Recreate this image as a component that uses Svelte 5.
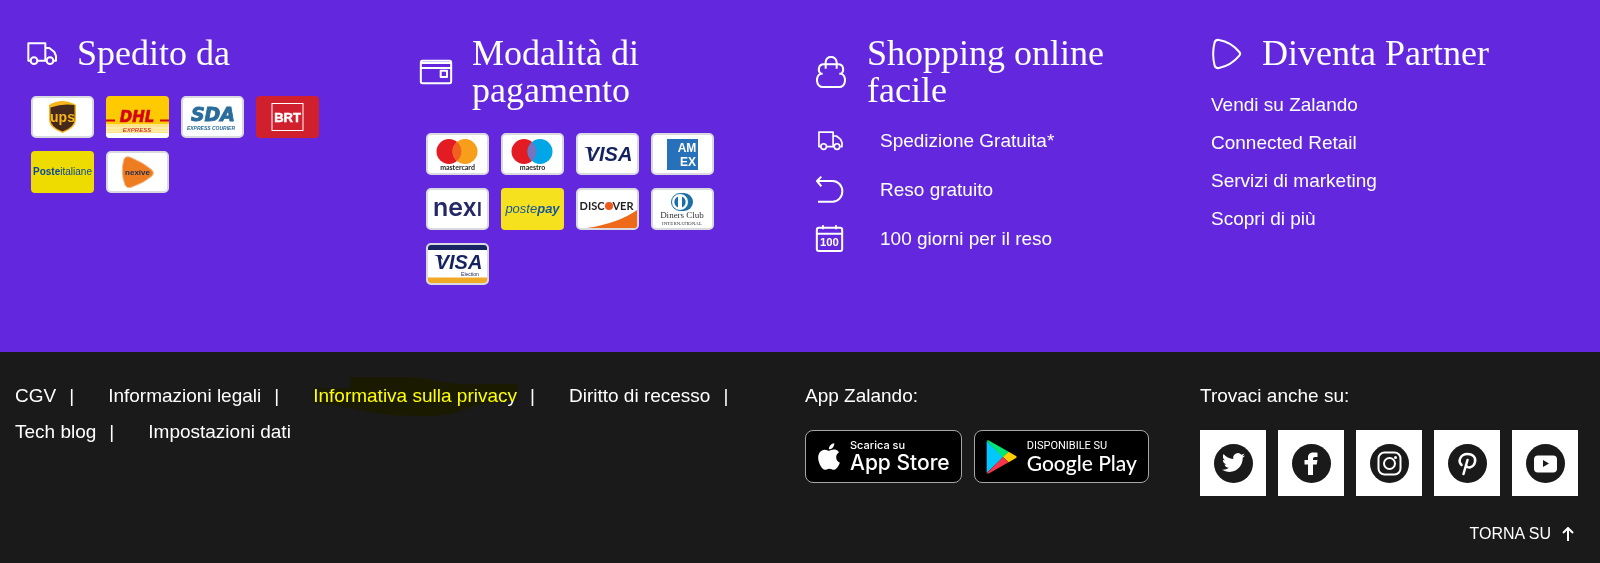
<script lang="ts">
  const carriers = ['ups', 'dhl', 'sda', 'brt', 'poste', 'nexive']
  const payments = ['mastercard', 'maestro', 'visa', 'amex', 'nexi', 'postepay', 'discover', 'diners', 'electron']
  const benefits = [
    { icon: 'truck', label: 'Spedizione Gratuita*' },
    { icon: 'return', label: 'Reso gratuito' },
    { icon: 'calendar', label: '100 giorni per il reso' },
  ]
  const partner = ['Vendi su Zalando', 'Connected Retail', 'Servizi di marketing', 'Scopri di più']
  const legal = ['CGV', 'Informazioni legali', 'Informativa sulla privacy', 'Diritto di recesso', 'Tech blog', 'Impostazioni dati']
  const social = ['Twitter', 'Facebook', 'Instagram', 'Pinterest', 'YouTube']
  const marked = 'Informativa sulla privacy'
</script>

{#snippet truck(width: number)}
  <svg class="line" {width} viewBox="-4 0 90 70" aria-hidden="true">
    <path d="M10 56H3V4h51v52H31M54 18h12l15 12 5 12v14h-6M54 56h3" />
    <circle cx="20" cy="56" r="10" /><circle cx="68" cy="56" r="10" />
  </svg>
{/snippet}

<!-- Every brand card shares a 63x42 drawing area -->
{#snippet brand(name: string)}
  <svg class="card" viewBox="0 0 63 42" role="img" aria-label={name}>
    {#if name === 'dhl'}
      <rect width="63" height="42" rx="4" fill="#ffcb00" />
      <path d="M0 28h63v10q0 4-4 4H4q-4 0-4-4z" fill="#ffe58a" />
      <path d="M0 32h63M0 35h63" stroke="#fff3c4" />
      <path d="M0 37h63v1q0 4-4 4H4q-4 0-4-4z" fill="#fff" />
      <path d="M0 24.500h9M54 24.500h9" stroke="#d40511" stroke-width="2" />
      <text x="31" y="26" class="wide" font-size="15" fill="#d40511" stroke="#d40511" stroke-width=".6">DHL</text>
      <text x="31" y="36" font-size="6" font-style="italic" fill="#d40511">EXPRESS</text>
    {:else if name === 'brt'}
      <rect width="63" height="42" rx="4" fill="#d0202e" />
      <rect x="16" y="7.500" width="31" height="27" fill="none" stroke="#fff" />
      <text x="31.500" y="26" font-size="13" font-weight="700" fill="#fff" stroke="#fff" stroke-width=".5">BRT</text>
    {:else if name === 'poste'}
      <rect width="63" height="42" rx="4" fill="#eedc00" />
      <text x="31.500" y="24" font-size="10" fill="#0a479c"><tspan font-weight="700">Poste</tspan>italiane</text>
    {:else if name === 'postepay'}
      <rect width="63" height="42" rx="4" fill="#f6e11f" />
      <text x="31.500" y="25" font-size="13" font-style="italic" fill="#17569b">poste<tspan font-weight="700">pay</tspan></text>
    {:else}
      <rect x="1" y="1" width="61" height="40" rx="4" fill="#fff" stroke="#d9d9e0" stroke-width="2" />
      {#if name === 'ups'}
        <path d="M18 9q13-8 27 0v15q0 8-13.500 13Q18 32 18 24z" fill="#f7b51b" />
        <path d="M19.500 11.500Q32 7 43.500 9v15q0 7-12 11.500-12-4.500-12-11.500z" fill="#45291b" />
        <text x="31.500" y="26" font-size="14" font-weight="700" fill="#f7b51b">ups</text>
      {:else if name === 'sda'}
        <text x="32" y="25" class="wide" font-size="19" fill="#2a6c9c" stroke="#2a6c9c" stroke-width=".9">SDA</text>
        <text x="30" y="34" font-size="5" font-weight="700" font-style="italic" fill="#2a6c9c">EXPRESS COURIER</text>
      {:else if name === 'nexive'}
        <path d="M18 8q2-4 8-1 12 5 20 12 3 3 0 6-8 7-20 11-5 2-7-2-5-13-1-26z" fill="#ee7d22" stroke="#f6b98a" stroke-width="1" />
        <text x="31.500" y="24" font-size="8" font-weight="700" fill="#1c2a57">nexive</text>
      {:else if name === 'mastercard' || name === 'maestro'}
        <circle cx="23" cy="18.500" r="12.500" fill="#e31b23" />
        <circle cx="39" cy="18.500" r="12.500" fill={name === 'maestro' ? '#00a6e6' : '#f79e1b'} />
        <path d="M31 9a12.500 12.500 0 0 1 0 19 12.500 12.500 0 0 1 0-19" fill={name === 'maestro' ? '#7673c0' : '#f2601f'} />
        <text x="31.500" y="37" class="geo" font-size="7" font-weight="700" fill="#222">{name}</text>
      {:else if name === 'visa'}
        <text x="33" y="28" font-size="20" font-weight="700" font-style="italic" fill="#14225f">VISA</text>
        <path d="M8 14h7l2 5q-4-4-9-5" fill="#14225f" />
      {:else if name === 'amex'}
        <rect x="16" y="6" width="31" height="31" fill="#2671b9" />
        <text x="36" y="19" font-size="12" font-weight="700" fill="#fff">AM</text>
        <text x="37" y="33" font-size="12" font-weight="700" fill="#fff">EX</text>
      {:else if name === 'nexi'}
        <text x="31.500" y="28" class="inter" font-size="25" font-weight="600" fill="#232866">nex<tspan font-size="19">I</tspan></text>
      {:else if name === 'discover'}
        <path d="M11 40q32-5 50-18v16q0 2-2 2z" fill="#ee6a1a" />
        <text x="16" y="22" class="geo" font-size="11" font-weight="700" fill="#222">DISC</text>
        <circle cx="33" cy="18" r="4" fill="#ee5a1a" />
        <text x="47" y="22" class="geo" font-size="11" font-weight="700" fill="#222">VER</text>
      {:else if name === 'diners'}
        <path d="M29 5h4a9 9 0 0 1 0 18h-4z" fill="#1b6ea8" />
        <circle cx="29" cy="14" r="8.500" fill="#fff" stroke="#1b6ea8" />
        <path d="M27 8.500a6 6 0 0 0 0 11zM31 8.500a6 6 0 0 1 0 11z" fill="#1b6ea8" />
        <text x="31" y="30" class="serif" font-size="9" fill="#333">Diners Club</text>
        <text x="31" y="37" class="serif" font-size="5" fill="#333">INTERNATIONAL</text>
      {:else if name === 'electron'}
        <path d="M2 7V5q0-3 3-3h53q3 0 3 3v2z" fill="#182560" />
        <path d="M2 34.500V37q0 3 3 3h53q3 0 3-3v-2.500z" fill="#f0a926" />
        <text x="33" y="26" font-size="20" font-weight="700" font-style="italic" fill="#14225f">VISA</text>
        <path d="M8 12h7l2 5q-4-4-9-5" fill="#14225f" />
        <text x="44" y="33" font-size="5" fill="#14225f">Election</text>
      {/if}
    {/if}
  </svg>
{/snippet}

<section class="services">
  <div class="col">
    <h2><span class="slot">{@render truck(30)}</span>Spedito da</h2>
    <div class="cards">
      {#each carriers as name}{@render brand(name)}{/each}
    </div>
  </div>

  <div class="col">
    <h2>
      <span class="slot">
        <svg class="line" width="32" viewBox="0 0 96 72" aria-hidden="true">
          <rect x="2.500" y="2.500" width="91" height="67" rx="5" />
          <path d="M3 9h90M3 24h90" />
          <rect x="62" y="32" width="19" height="19" stroke-width="6" />
        </svg>
      </span>
      Modalità di pagamento
    </h2>
    <div class="cards">
      {#each payments as name}{@render brand(name)}{/each}
    </div>
  </div>

  <div class="col">
    <h2>
      <span class="slot">
        <svg class="line" width="30" viewBox="0 0 90 96" aria-hidden="true">
          <path d="M29 38V18q2-15 16-15t17 15v20" />
          <path d="M23 25h44c15 0 19 18 9 28 16 8 15 40-7 40H21C-1 93-2 61 14 53 4 43 8 25 23 25zM14 53h6M76 53h-6" />
        </svg>
      </span>
      Shopping online facile
    </h2>
    <ul class="benefits">
      {#each benefits as item}
        <li>
          <span class="slot">
            {#if item.icon === 'truck'}
              {@render truck(25)}
            {:else if item.icon === 'return'}
              <svg class="line" width="27" viewBox="0 0 81 81" aria-hidden="true">
                <path d="M16 2 3 15l13 16M3 15h47a29 31 0 0 1 0 62H6" />
              </svg>
            {:else}
              <svg class="line" width="27" viewBox="0 0 81 81" aria-hidden="true">
                <rect x="2.500" y="8" width="76" height="70" rx="6" />
                <path d="M3 26h75M21 1v12M60 1v12" />
                <text x="40" y="63" font-size="34" font-weight="700">100</text>
              </svg>
            {/if}
          </span>
          {item.label}
        </li>
      {/each}
    </ul>
  </div>

  <div class="col">
    <h2>
      <span class="slot">
        <svg class="line" width="29" viewBox="0 0 87 90" aria-hidden="true">
          <path d="M8 10q3-9 13-7 36 6 61 36 5 6 0 11-25 30-61 37-10 2-13-7-9-36 0-70z" />
        </svg>
      </span>
      Diventa Partner
    </h2>
    <ul class="partner">
      {#each partner as label}
        <li><a href="#partner">{label}</a></li>
      {/each}
    </ul>
  </div>
</section>

<footer>
  <ul class="legal">
    {#each legal as label, i}
      <li>
        <a href="#legal" class:marked={label === marked}>
          {label}
          {#if label === marked}
            <svg class="marker" width="208" height="42" viewBox="0 0 208 42" aria-hidden="true">
              <path d="M0 12h37V1h50c32 0 38 7 68 7h50v17c-20 1-36 2-47 6-16 6-22 9-45 9-38 0-48-2-66-6C28 30 12 28 0 27z" />
            </svg>
          {/if}
        </a>
        {#if i < legal.length - 1}<span class="bar">|</span>{/if}
      </li>
    {/each}
  </ul>

  <div>
    <p>App Zalando:</p>
    <div class="stores">
      <a href="#app-store" class="store apple">
        <svg width="24" height="29" viewBox="3 1.500 18 21" aria-hidden="true">
          <path fill="#fff" d="M18.710 19.500c-.83 1.240-1.710 2.450-3.050 2.470-1.340.03-1.770-.79-3.290-.79-1.530 0-2 .77-3.270.82-1.310.05-2.300-1.320-3.140-2.530C4.250 17 2.940 12.450 4.700 9.390c.87-1.520 2.430-2.480 4.120-2.510 1.280-.02 2.500.87 3.290.87.78 0 2.260-1.070 3.810-.91.65.03 2.470.26 3.640 1.980-.09.06-2.170 1.280-2.150 3.810.03 3.020 2.650 4.030 2.680 4.040-.03.07-.42 1.440-1.380 2.830M13 3.500c.73-.83 1.940-1.460 2.940-1.500.13 1.170-.34 2.350-1.040 3.190-.69.85-1.830 1.510-2.950 1.420-.15-1.150.41-2.350 1.050-3.110z" />
        </svg>
        <span><small>Scarica su</small>App Store</span>
      </a>
      <a href="#google-play" class="store google">
        <svg width="31" height="34" viewBox="0 0 93 102" aria-hidden="true">
          <path d="M2 3v96l50-48z" fill="#00c8ff" />
          <path d="M2 2q4-3 9 1l57 32-17 18z" fill="#00e676" />
          <path d="m68 35 22 13q4 3 0 6L68 67 51 51z" fill="#ffce00" />
          <path d="M2 100q4 2 9-1l57-32-17-16z" fill="#f6344a" />
        </svg>
        <span><small>DISPONIBILE SU</small>Google Play</span>
      </a>
    </div>
  </div>

  <div>
    <p>Trovaci anche su:</p>
    <div class="social">
      {#each social as name}
        <a href="#social" aria-label={name}>
          <svg width="39" height="39" viewBox="0 0 39 39" aria-hidden="true">
            <circle cx="19.500" cy="19.500" r="19.500" fill="#1a1a1a" />
            {#if name === 'Twitter'}
              <path transform="translate(8 7) scale(.96)" fill="#fff" d="M23.950 4.570a10 10 0 0 1-2.820.77 4.960 4.960 0 0 0 2.160-2.720c-.95.56-2 .96-3.130 1.180a4.920 4.920 0 0 0-8.380 4.480C7.690 8.090 4.070 6.130 1.640 3.160a4.820 4.820 0 0 0-.67 2.480c0 1.710.87 3.210 2.190 4.100a4.900 4.900 0 0 1-2.230-.62v.06a4.920 4.920 0 0 0 3.950 4.830 5 5 0 0 1-2.210.09 4.940 4.940 0 0 0 4.600 3.420A9.870 9.870 0 0 1 0 19.540a14 14 0 0 0 7.550 2.210c9.050 0 14-7.500 14-13.980 0-.21 0-.42-.02-.63a9.940 9.940 0 0 0 2.460-2.550z" />
            {:else if name === 'Facebook'}
              <path fill="#fff" d="M16 31V20.500h-3.500V16H16v-2.500c0-3.500 2-5 5.500-5 2 0 4 .2 4 .2V13h-2.300c-1.500 0-2.200.8-2.200 2v1h4.500l-.8 4.500H21V31z" />
            {:else if name === 'Instagram'}
              <g fill="none" stroke="#fff" stroke-width="2">
                <rect x="8.500" y="8.500" width="22" height="22" rx="6" />
                <circle cx="19.500" cy="19.500" r="5.500" />
              </g>
              <circle cx="25.500" cy="13.500" r="1.500" fill="#fff" />
            {:else if name === 'Pinterest'}
              <path fill="none" stroke="#fff" stroke-width="2.500" stroke-linecap="round" d="M13.500 21c-4-4-1-11 6-11 6 0 8.500 4 7.500 8-1.500 6-8 7-9 3M19.500 16 15.500 30" />
            {:else}
              <rect x="8" y="11.500" width="23" height="17" rx="4" fill="#fff" />
              <path d="m17 16 6 3.500-6 3.500z" fill="#1a1a1a" />
            {/if}
          </svg>
        </a>
      {/each}
    </div>
    <button type="button" class="top">
      TORNA SU
      <svg width="12" height="14" viewBox="0 0 12 14" aria-hidden="true">
        <path d="M6 14V1M1 6l5-5 5 5" fill="none" stroke="currentColor" stroke-width="2" />
      </svg>
    </button>
  </div>
</footer>

<style>
  :global(body) {
    margin: 0;
    background: #1a1a1a;
    color: #fff;
    font: 19px/36px 'Liberation Sans', Arial, sans-serif;
  }

  a { color: inherit; text-decoration: none; }
  ul { margin: 0; padding: 0; list-style: none; }
  p { margin: 0 0 16px; }

  .services,
  footer {
    display: grid;
    grid-template-columns: repeat(4, minmax(0, 1fr));
    padding: 35px 5px 67px 15px;
  }
  .services { background: #6328de; }

  h2 {
    display: flex;
    align-items: center;
    gap: 10px;
    margin: 0;
    padding-right: 80px;
    font: 400 36px/37px 'Liberation Serif', 'Times New Roman', serif;
  }
  .slot {
    flex: none;
    display: flex;
    justify-content: center;
    width: 52px;
  }
  .line {
    overflow: visible;
    fill: none;
    stroke: #fff;
    stroke-width: 6;
    stroke-linejoin: round;
  }
  .line text { fill: #fff; stroke: none; }

  .cards {
    display: grid;
    grid-template-columns: repeat(4, 63px);
    gap: 13px 12px;
    margin: 24px 0 0 16px;
  }
  .card { display: block; width: 63px; height: 42px; }
  text { text-anchor: middle; font-family: 'Liberation Sans', Arial, sans-serif; }
  .wide { font-family: 'DejaVu Sans', sans-serif; font-weight: 700; font-style: italic; }
  .geo { font-family: Lato, sans-serif; }
  .inter { font-family: Inter, sans-serif; }
  .serif { font-family: 'Liberation Serif', serif; }

  .benefits { margin-top: 7px; }
  .benefits li {
    display: flex;
    align-items: center;
    gap: 27px;
    height: 49px;
  }
  .benefits .slot { width: 48px; }

  .partner { margin: 14px 0 0 11px; line-height: 38px; }

  footer { padding: 26px 5px 19px 15px; }
  .legal {
    grid-column: span 2;
    display: flex;
    flex-wrap: wrap;
    align-content: flex-start;
    column-gap: 34px;
  }
  .legal li { display: flex; gap: 13px; }
  .marked { position: relative; }
  .marker {
    position: absolute;
    top: -2px;
    left: 0;
    fill: #ff0;
    mix-blend-mode: multiply;
  }

  .stores,
  .social { display: flex; gap: 12px; }
  .store {
    display: flex;
    align-items: center;
    box-sizing: border-box;
    height: 53px;
    padding: 0 11px;
    border: 1px solid #a6a6a6;
    border-radius: 8px;
    background: #000;
    white-space: nowrap;
  }
  .store small { display: block; font-size: 11px; line-height: 13px; }
  .apple { gap: 9px; font: 500 21px/22px Inter, sans-serif; }
  .google { gap: 10px; font: 500 21px/22px Lato, sans-serif; }
  .google small { font-family: Roboto, sans-serif; font-weight: 400; }

  .social a {
    display: grid;
    place-items: center;
    width: 66px;
    height: 66px;
    background: #fff;
  }

  .top {
    display: flex;
    align-items: center;
    gap: 11px;
    margin: 28px 21px 0 auto;
    padding: 0;
    border: 0;
    background: none;
    color: #fff;
    font: 16px/20px 'Liberation Sans', Arial, sans-serif;
    cursor: pointer;
  }
</style>
